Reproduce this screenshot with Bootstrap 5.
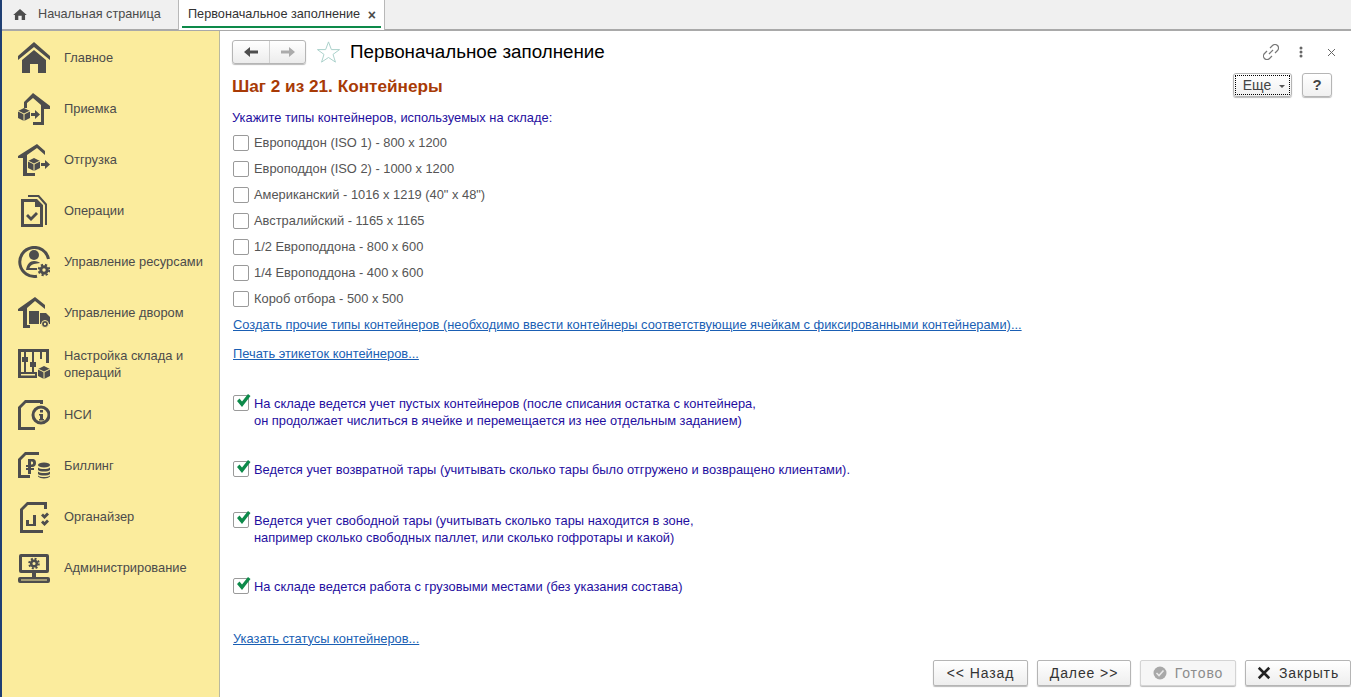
<!DOCTYPE html>
<html lang="en">
<head>
  <meta charset="UTF-8">
  <title>Первоначальное заполнение</title>
  <link href="https://cdn.jsdelivr.net/npm/bootstrap@5.3.0/dist/css/bootstrap.min.css" rel="stylesheet">
  <style>
    html, body { height: 100%; overflow: hidden; }
    body { font-family: "Liberation Sans", Arial, sans-serif; font-size: 12.87px; color: #4b4b4b; background: #fff; }
    a { color: #1a5fb4; }

    .app-shell { height: 697px; border-left: 2px solid #1f3f73; }
    .tabbar { height: 31px; background: #f0f0f0; border-bottom: 2px solid #a9a9a9; font-size: 12.7px; }
    .tab-home { width: 176px; padding-left: 11px; gap: 11px; color: #4b4b4b; }
    .tab-open { width: 207px; height: 30px; padding: 0 8px 0 9px; background: #fff; border-left: 1px solid #b8b8b8; border-right: 1px solid #b8b8b8; color: #333; position: relative; }
    .tab-open::after { content: ""; position: absolute; left: 3px; right: 3px; bottom: 2px; height: 2px; background: #0d8a4a; }
    .tab-x { font-weight: 700; font-size: 14px; color: #4b4b4b; line-height: 1; }

    .side-menu { width: 218px; flex: none; background: #fbec9d; border-right: 1px solid #b9b9a0; padding-top: 1px; }
    .side-item { height: 51px; padding-left: 16px; gap: 14px; color: #4b4b4b; line-height: 17px; }
    .side-item svg { flex: none; width: 32px; height: 32px; fill: #4d4d4d; }
    .side-label { width: 145px; }
    .ico-line { fill: none; stroke: #4d4d4d; stroke-width: 3; }
    .ico-gap { fill: none; stroke: #fbec9d; stroke-width: 1; }

    .work-area { padding: 9px 0 0 12px; min-width: 0; }
    .nav-arrows { width: 74px; height: 24px; border: 1px solid #b5b5b5; border-radius: 3px; background: linear-gradient(#fff, #ececec); box-shadow: 0 1px 1px #bbb; }
    .nav-arrows > div { width: 50%; }
    .nav-arrows > div + div { border-left: 1px solid #d0d0d0; }
    .star-mark { margin-left: 10px; }
    .page-title { font-size: 18.8px; color: #000; line-height: 24px; margin-left: 9px; }
    .head-tools { padding-right: 15px; }
    .tool-dots { margin: 0 24px 0 20px; }
    .step-title { font-size: 17.2px; font-weight: 700; color: #a83a06; line-height: 18px; margin: 2px 0 0; }

    .btn-plain { height: 24px; border: 1px solid #b5b5b5; border-radius: 3px; background: linear-gradient(#fff, #f0f0f0); box-shadow: 0 1px 1px #bbb; color: #444; font-size: 14px; padding: 0; display: flex; align-items: center; justify-content: center; }
    .btn-more { width: 59px; }
    .btn-more span { border: 1px dotted #000; width: 55px; height: 20px; padding-left: 3px; display: flex; align-items: center; justify-content: center; gap: 8px; }
    .caret-mini { width: 0; height: 0; border-left: 3px solid transparent; border-right: 3px solid transparent; border-top: 3px solid #555; margin-top: 2px; }
    .btn-help { width: 30px; font-size: 15px; font-weight: 700; margin-left: 10px; margin-right: 19px; }

    .hint-text { color: #1f0fa0; line-height: 17px; }
    .box-row { height: 26px; gap: 5px; color: #555; }
    .box-mark { width: 16px; height: 16px; flex: none; margin-left: 1px; border: 1px solid #9a9a9a; border-radius: 2px; background: #fff; position: relative; }
    .box-mark svg { position: absolute; left: 1px; top: -3px; width: 16px; height: 16px; }
    .check-row { gap: 5px; color: #1f0fa0; line-height: 17px; }
    .form-link { color: #1a5fb4; line-height: 17px; margin-left: 1px; }

    .foot-bar { gap: 9px; position: absolute; right: 0; bottom: 11px; }
    .foot-btn { height: 26px; border: 1px solid #b5b5b5; border-radius: 2px; background: linear-gradient(#fff, #eeeeee); box-shadow: 0 1px 1px #bbb; color: #333; font-size: 14px; gap: 8px; display: flex; align-items: center; justify-content: center; padding: 0; letter-spacing: .9px; }
    .foot-off { color: #8c8c8c; border-color: #d4d4d4; background: #f6f6f6; }
  </style>
</head>
<body>
<div class="app-shell d-flex flex-column">

  <!-- Tabs -->
  <div class="tabbar d-flex flex-none">
    <div class="tab-home d-flex align-items-center">
      <svg width="14" height="11" viewBox="0 0 16 13" fill="#4d4d4d"><path d="M8 0 16 7H14V13H10V8H6V13H2V7H0Z"/></svg>
      <span>Начальная страница</span>
    </div>
    <div class="tab-open d-flex align-items-center justify-content-between">
      <span>Первоначальное заполнение</span><span class="tab-x">×</span>
    </div>
  </div>

  <div class="d-flex flex-grow-1 position-relative">
    <!-- Sections -->
    <div class="side-menu">
      <div class="side-item d-flex align-items-center">
        <svg viewBox="0 0 32 32"><path d="M16 0 32 14V18L16 5 0 18V14Z"/><path d="M4 18 16 8 28 18V31H20V22H12V31H4Z"/></svg>
        <span class="side-label">Главное</span>
      </div>
      <div class="side-item d-flex align-items-center">
        <svg viewBox="0 0 32 32"><path d="M15 0 32 13V16H26V32H15V29H23V12L15 5 9 10V15H6V9Z"/><path d="M6 15 12 18V25L6 28 0 25V18Z"/><path class="ico-gap" d="M0 18 6 21 12 18M6 21V28"/><path d="M13 20H17V17L22 21.500 17 26V23H13Z"/></svg>
        <span class="side-label">Приемка</span>
      </div>
      <div class="side-item d-flex align-items-center">
        <svg viewBox="0 0 32 32"><path d="M19 0 27 7V11L19 4 9 11V29H17V32H5V14H0V12Z"/><path d="M16 14 22 17V24L16 27 10 24V17Z"/><path class="ico-gap" d="M10 17 16 20 22 17M16 20V27"/><path d="M23 19H27V16L32 20.500 27 25V22H23Z"/></svg>
        <span class="side-label">Отгрузка</span>
      </div>
      <div class="side-item d-flex align-items-center">
        <svg viewBox="0 0 32 32"><path d="M3 4H19L25 10V32H3ZM6 7V29H22V12H17V7Z" fill-rule="evenodd"/><path d="M10 0H21L29 9V30H27V10L20 2H10Z"/><path d="M8 21 10 19 13 22 18 17 20 19 13 26Z"/></svg>
        <span class="side-label">Операции</span>
      </div>
      <div class="side-item d-flex align-items-center">
        <svg viewBox="0 0 32 32"><path class="ico-line" d="M30.500 13A14.500 14.500 0 1 0 19 30.200"/><circle cx="16" cy="9" r="5"/><path d="M8 24C9 18 12 15 16 15C19 15 21 16 22 17L16 18C13 19 12 20 11.500 22H19V24Z"/><circle cx="26" cy="24" r="3.200" fill="none" stroke="#4d4d4d" stroke-width="3"/><circle cx="26" cy="24" r="5.300" fill="none" stroke="#4d4d4d" stroke-width="2" stroke-dasharray="2.200 2.020"/></svg>
        <span class="side-label">Управление ресурсами</span>
      </div>
      <div class="side-item d-flex align-items-center">
        <svg viewBox="0 0 32 32"><path d="M17 0 27 8V12L17 4 9 11V28H12V31H5V14H0V12Z"/><path d="M11 14H21V27H11Z"/><path d="M22 16H28L32 20V27H22Z"/><circle cx="27" cy="27" r="3.500" stroke="#fbec9d"/><circle cx="27" cy="27" r="1.200" fill="#fbec9d"/></svg>
        <span class="side-label">Управление двором</span>
      </div>
      <div class="side-item d-flex align-items-center">
        <svg viewBox="0 0 32 32"><path d="M0 1H31V15H28V4H3V24H19V30H0ZM3 26V27.500H17V26Z" fill-rule="evenodd"/><path d="M6 4H8V9H10V14H8V24H6V14H4V9H6ZM14 4H16V14H18V19H16V24H14V19H12V14H14ZM22 4H24V11H22Z"/><path d="M26 18 32 21V28L26 31 20 28V21Z"/><path class="ico-gap" d="M20 21 26 24 32 21M26 24V31"/></svg>
        <span class="side-label">Настройка склада и операций</span>
      </div>
      <div class="side-item d-flex align-items-center">
        <svg viewBox="0 0 32 32"><path d="M7 1H25V5H22V4H8L3 9V28H17V31H0V8Z"/><circle class="ico-line" cx="23" cy="16" r="8"/><path d="M22 11H25V13.500H22ZM21 15H25V20H26V21.500H21V20H22V16.500H21Z"/></svg>
        <span class="side-label">НСИ</span>
      </div>
      <div class="side-item d-flex align-items-center">
        <svg viewBox="0 0 32 32"><path d="M7 2H21V5H8L3 10V25H12V28H0V9Z"/><path d="M10 9H14C17.500 9 18 11 18 13S17 17 14 17H13V18H16V20H13V24H10V20H8V18H10V17H8V15H10ZM13 11.500V14.500H14C15.500 14.500 15.500 11.500 14 11.500Z" fill-rule="evenodd"/><ellipse cx="26" cy="15" rx="6" ry="2.500"/><path d="M20 17.500C22 19.500 30 19.500 32 17.500V20C30 22 22 22 20 20ZM20 21.500C22 23.500 30 23.500 32 21.500V24C30 26 22 26 20 24ZM20 25.500C22 27.500 30 27.500 32 25.500V26.500C30 29 22 29 20 26.500Z"/></svg>
        <span class="side-label">Биллинг</span>
      </div>
      <div class="side-item d-flex align-items-center">
        <svg viewBox="0 0 32 32"><path d="M9 1H29V8H26V4H10L5 9V29H25V32H2V8Z"/><path d="M8 19H11V23H15V14H18V25H8Z"/><path d="M23 14.500 25 12.500 26.500 14 29 11.500 31 13.500 26.500 18ZM23 21.500 25 19.500 26.500 21 29 18.500 31 20.500 26.500 25Z"/></svg>
        <span class="side-label">Органайзер</span>
      </div>
      <div class="side-item d-flex align-items-center">
        <svg viewBox="0 0 32 32"><path d="M3 2H29Q31 2 31 4V19Q31 21 29 21H3Q1 21 1 19V4Q1 2 3 2ZM4 5V18H28V5Z" fill-rule="evenodd"/><path d="M14 21H18V25H30Q32 25 32 27V29Q32 31 30 31H2Q0 31 0 29V27Q0 25 2 25H14ZM3 27.500V28.500H29V27.500Z" fill-rule="evenodd"/><circle cx="16" cy="11.500" r="2.800" fill="none" stroke="#4d4d4d" stroke-width="2.500"/><circle cx="16" cy="11.500" r="4.800" fill="none" stroke="#4d4d4d" stroke-width="2" stroke-dasharray="2 1.770"/></svg>
        <span class="side-label">Администрирование</span>
      </div>
    </div>

    <!-- Form -->
    <div class="work-area flex-grow-1">
      <div class="d-flex align-items-center">
        <div class="nav-arrows d-flex">
          <div class="d-flex align-items-center justify-content-center">
            <svg width="14" height="12" viewBox="0 0 14 12" fill="#4d4d4d"><path d="M0 6 6 1V4.500H14V7.500H6V11Z"/></svg>
          </div>
          <div class="d-flex align-items-center justify-content-center">
            <svg width="14" height="12" viewBox="0 0 14 12" fill="#ababab"><path d="M14 6 8 1V4.500H0V7.500H8V11Z"/></svg>
          </div>
        </div>
        <svg class="star-mark" width="25" height="24" viewBox="0 0 26 24" fill="none" stroke="#a8cfc9"><path d="M13 1.500 16 9.500H24.500L17.700 14.500 20.200 22.500 13 17.700 5.800 22.500 8.300 14.500 1.500 9.500H10Z"/></svg>
        <div class="page-title flex-grow-1">Первоначальное заполнение</div>
        <div class="head-tools d-flex align-items-center">
          <svg width="16" height="16" viewBox="0 0 16 16" fill="none" stroke="#777" stroke-width="1.200"><path d="M7 4 9.500 1.500A3 3 0 0 1 14.500 6.500L12 9"/><path d="M9 12 6.500 14.500A3 3 0 0 1 1.500 9.500L4 7"/><path d="M6 10 10 6"/></svg>
          <svg class="tool-dots" width="4" height="12" viewBox="0 0 4 12" fill="#666"><circle cx="2" cy="2" r="1.500"/><circle cx="2" cy="6" r="1.500"/><circle cx="2" cy="10" r="1.500"/></svg>
          <svg width="9" height="9" viewBox="0 0 9 9" stroke="#666"><path d="M1 1 8 8M8 1 1 8"/></svg>
        </div>
      </div>

      <div class="d-flex justify-content-between align-items-center" style="margin-top:9px">
        <h1 class="step-title">Шаг 2 из 21. Контейнеры</h1>
        <div class="d-flex">
          <button class="btn-plain btn-more"><span>Еще <i class="caret-mini"></i></span></button>
          <button class="btn-plain btn-help">?</button>
        </div>
      </div>

      <div class="hint-text" style="margin-top:12px">Укажите типы контейнеров, используемых на складе:</div>
      <div style="margin-top:4px">
        <div class="box-row d-flex align-items-center"><span class="box-mark"></span>Европоддон (ISO 1) - 800 х 1200</div>
        <div class="box-row d-flex align-items-center"><span class="box-mark"></span>Европоддон (ISO 2) - 1000 х 1200</div>
        <div class="box-row d-flex align-items-center"><span class="box-mark"></span>Американский - 1016 х 1219 (40" х 48")</div>
        <div class="box-row d-flex align-items-center"><span class="box-mark"></span>Австралийский - 1165 х 1165</div>
        <div class="box-row d-flex align-items-center"><span class="box-mark"></span>1/2 Европоддона - 800 х 600</div>
        <div class="box-row d-flex align-items-center"><span class="box-mark"></span>1/4 Европоддона - 400 х 600</div>
        <div class="box-row d-flex align-items-center"><span class="box-mark"></span>Короб отбора - 500 х 500</div>
      </div>
      <div style="margin-top:3px"><a class="form-link" href="#">Создать прочие типы контейнеров (необходимо ввести контейнеры соответствующие ячейкам с фиксированными контейнерами)...</a></div>
      <div style="margin-top:10px"><a class="form-link" href="#">Печать этикеток контейнеров...</a></div>

      <div class="check-row d-flex" style="margin-top:31px"><span class="box-mark"><svg viewBox="0 0 16 16"><path d="M2 8 4.500 5.500 7 8.500 13 1 15.500 3 7 14Z" fill="#0d8a4a"/></svg></span><span>На складе ведется учет пустых контейнеров (после списания остатка с контейнера,<br>он продолжает числиться в ячейке и перемещается из нее отдельным заданием)</span></div>
      <div class="check-row d-flex" style="margin-top:32px"><span class="box-mark"><svg viewBox="0 0 16 16"><path d="M2 8 4.500 5.500 7 8.500 13 1 15.500 3 7 14Z" fill="#0d8a4a"/></svg></span><span>Ведется учет возвратной тары (учитывать сколько тары было отгружено и возвращено клиентами).</span></div>
      <div class="check-row d-flex" style="margin-top:34px"><span class="box-mark"><svg viewBox="0 0 16 16"><path d="M2 8 4.500 5.500 7 8.500 13 1 15.500 3 7 14Z" fill="#0d8a4a"/></svg></span><span>Ведется учет свободной тары (учитывать сколько тары находится в зоне,<br>например сколько свободных паллет, или сколько гофротары и какой)</span></div>
      <div class="check-row d-flex" style="margin-top:32px"><span class="box-mark"><svg viewBox="0 0 16 16"><path d="M2 8 4.500 5.500 7 8.500 13 1 15.500 3 7 14Z" fill="#0d8a4a"/></svg></span><span>На складе ведется работа с грузовыми местами (без указания состава)</span></div>
      <div style="margin-top:34px"><a class="form-link" href="#">Указать статусы контейнеров...</a></div>

      <div class="foot-bar d-flex">
        <button class="foot-btn" style="width:95px">&lt;&lt; Назад</button>
        <button class="foot-btn" style="width:94px">Далее &gt;&gt;</button>
        <button class="foot-btn foot-off" style="width:96px">
          <svg width="14" height="14" viewBox="0 0 14 14"><circle cx="7" cy="7" r="6.500" fill="#a8a8a8"/><path d="M3.500 7 6 9.500 10.500 4.500" fill="none" stroke="#e8e8e8" stroke-width="1.600"/></svg>Готово
        </button>
        <button class="foot-btn" style="width:106px">
          <svg width="14" height="14" viewBox="0 0 12 12" stroke="#222" stroke-width="2.200"><path d="M1.500 1.500 10.500 10.500M10.500 1.500 1.500 10.500"/></svg>Закрыть
        </button>
      </div>
    </div>
  </div>
</div>
<script src="https://cdn.jsdelivr.net/npm/bootstrap@5.3.0/dist/js/bootstrap.bundle.min.js"></script>
</body>
</html>
